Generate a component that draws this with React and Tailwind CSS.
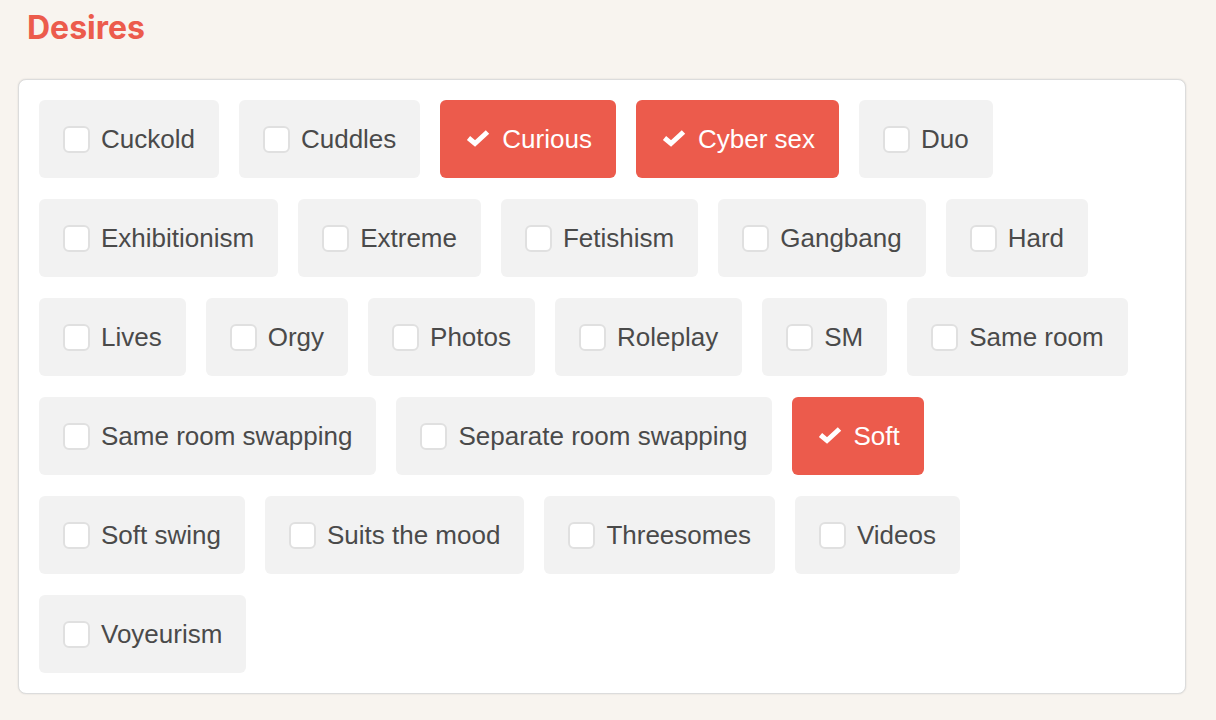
import React from "react";

const rows = [
  [["Cuckold"], ["Cuddles"], ["Curious", true], ["Cyber sex", true], ["Duo"]],
  [["Exhibitionism"], ["Extreme"], ["Fetishism"], ["Gangbang"], ["Hard"]],
  [["Lives"], ["Orgy"], ["Photos"], ["Roleplay"], ["SM"], ["Same room"]],
  [["Same room swapping"], ["Separate room swapping"], ["Soft", true]],
  [["Soft swing"], ["Suits the mood"], ["Threesomes"], ["Videos"]],
  [["Voyeurism"]],
];

function Chip({ label, checked }) {
  return (
    <div
      className={
        "flex h-[78px] items-center gap-[11px] rounded-[6px] px-6 " +
        (checked ? "bg-[#ec5b4c] text-white" : "bg-[#f2f2f2] text-[#4a4a4a]")
      }
    >
      {checked ? (
        <svg width="27" height="27" viewBox="0 0 27 27" className="shrink-0">
          <polyline
            points="4.5,12 11,17.5 23.5,6"
            fill="none"
            stroke="#ffffff"
            strokeWidth="5"
            style={{ filter: "blur(0.6px)" }}
          />
        </svg>
      ) : (
        <span className="block h-[27px] w-[27px] shrink-0 rounded-[6px] border-2 border-[#e0e0e0] bg-white" />
      )}
      <span className="text-[26px] leading-none whitespace-nowrap">{label}</span>
    </div>
  );
}

export default function App() {
  return (
    <div
      className="min-h-[720px] w-[1216px] bg-[#f8f4ef] pt-[12px]"
      style={{ fontFamily: '"Liberation Sans", Arial, sans-serif' }}
    >
      <h1
        className="pl-[27px] text-[32px] font-bold leading-[32px] text-[#ec5b4c]"
        style={{ fontFamily: "Inter, sans-serif" }}
      >
        Desires
      </h1>
      <div className="ml-[18px] mt-[35px] flex w-[1168px] flex-col gap-[21px] rounded-[8px] border border-[#dcdcdc] bg-white p-5 shadow-[0_0_2px_rgba(0,0,0,0.12)]">
        {rows.map((row, i) => (
          <div key={i} className="flex gap-5">
            {row.map(([label, checked]) => (
              <Chip key={label} label={label} checked={!!checked} />
            ))}
          </div>
        ))}
      </div>
    </div>
  );
}
